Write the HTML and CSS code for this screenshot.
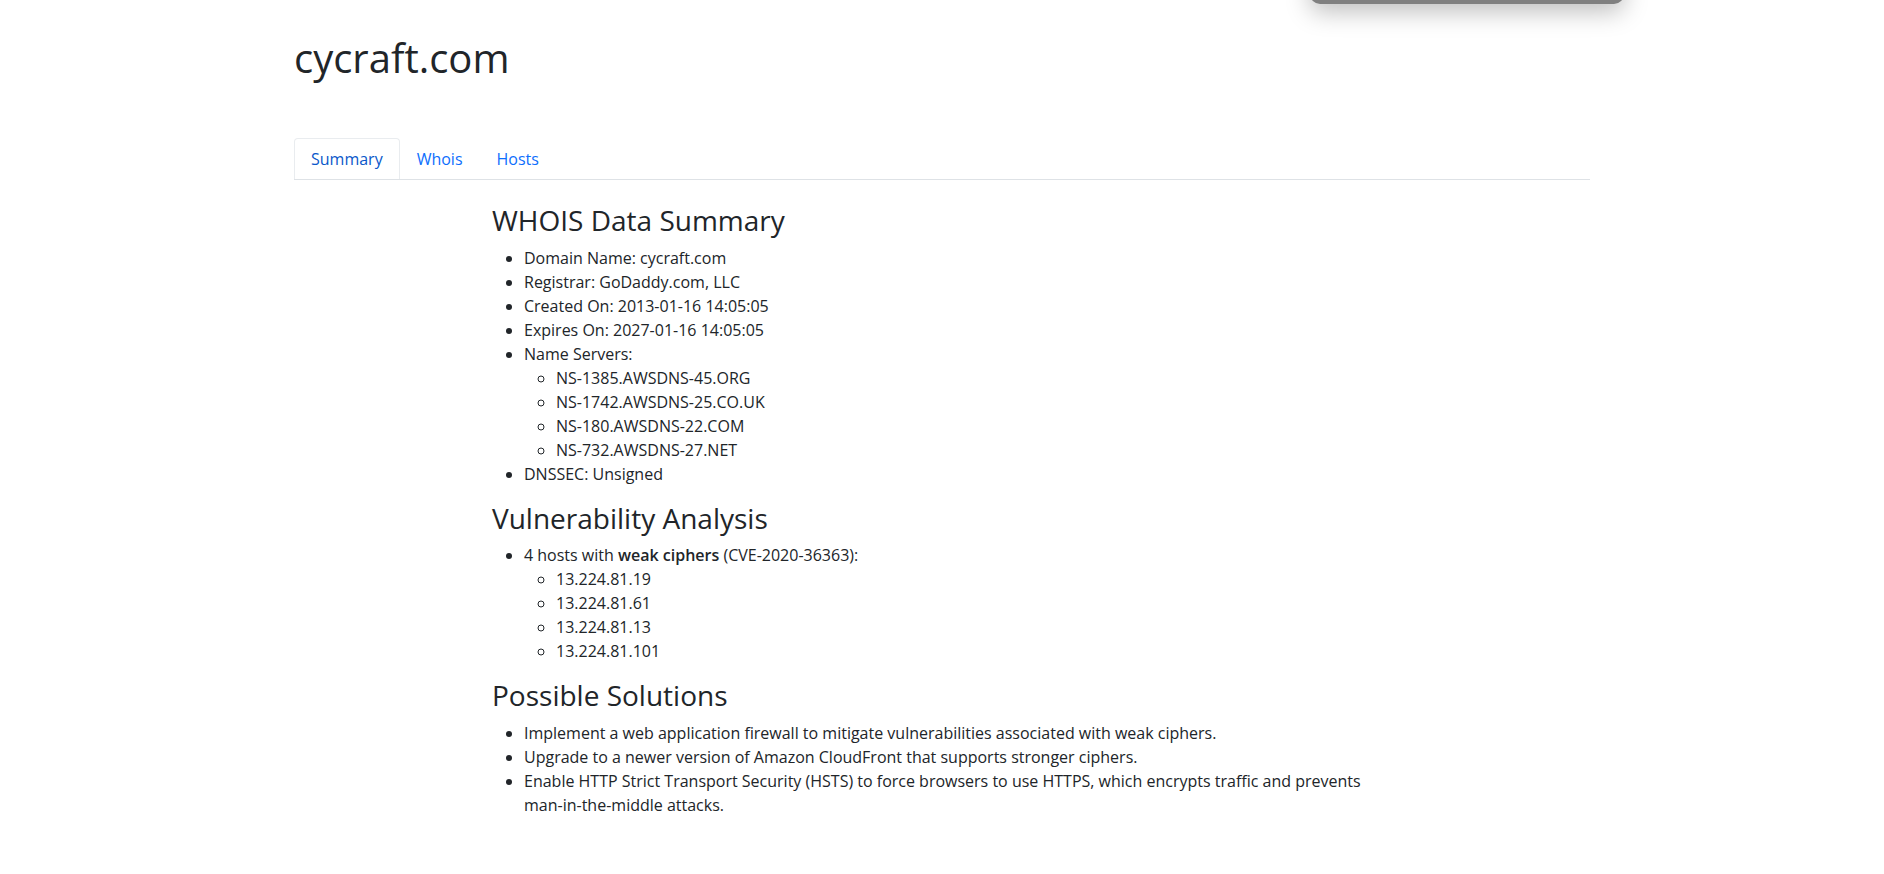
FILE: index.html
```html
<!DOCTYPE html>
<html lang="en">
<head>
<meta charset="utf-8">
<title>cycraft.com</title>
<link rel="stylesheet" href="styles.css">
</head>
<body>
<div class="toast" aria-hidden="true"></div>
<main class="container">
  <h1 class="title">cycraft.com</h1>
  <nav class="tabs">
    <a class="tab tab-active" href="#summary">Summary</a>
    <a class="tab" href="#whois">Whois</a>
    <a class="tab" href="#hosts">Hosts</a>
  </nav>
  <div class="report" id="summary">
    <h2>WHOIS Data Summary</h2>
    <ul>
      <li>Domain Name: cycraft.com</li>
      <li>Registrar: GoDaddy.com, LLC</li>
      <li>Created On: 2013-01-16 14:05:05</li>
      <li>Expires On: 2027-01-16 14:05:05</li>
      <li>Name Servers:
        <ul>
          <li>NS-1385.AWSDNS-45.ORG</li>
          <li>NS-1742.AWSDNS-25.CO.UK</li>
          <li>NS-180.AWSDNS-22.COM</li>
          <li>NS-732.AWSDNS-27.NET</li>
        </ul>
      </li>
      <li>DNSSEC: Unsigned</li>
    </ul>
    <h2>Vulnerability Analysis</h2>
    <ul>
      <li>4 hosts with <strong>weak ciphers</strong> (CVE-2020-36363):
        <ul>
          <li>13.224.81.19</li>
          <li>13.224.81.61</li>
          <li>13.224.81.13</li>
          <li>13.224.81.101</li>
        </ul>
      </li>
    </ul>
    <h2>Possible Solutions</h2>
    <ul>
      <li>Implement a web application firewall to mitigate vulnerabilities associated with weak ciphers.</li>
      <li>Upgrade to a newer version of Amazon CloudFront that supports stronger ciphers.</li>
      <li>Enable HTTP Strict Transport Security (HSTS) to force browsers to use HTTPS, which encrypts traffic and prevents man-in-the-middle attacks.</li>
    </ul>
  </div>
</main>
</body>
</html>
```
FILE: styles.css
```css
*, *::before, *::after { box-sizing: border-box; }
body {
  margin: 0;
  background: #fff;
  color: #212529;
  font: 400 16px/24px "Segoe UI", "Open Sans", "Noto Sans", sans-serif;
}
.container {
  max-width: 1320px;
  margin: 0 auto;
  padding: 32px 12px 0;
}
.title {
  margin: 0;
  padding-bottom: 54px;
  font-size: 40px;
  font-weight: 400;
  line-height: 52px;
}
.tabs {
  display: flex;
  border-bottom: 1px solid #dee2e6;
}
.tab {
  padding: 8px 16px;
  border: 1px solid transparent;
  border-bottom: 0;
  border-radius: 4px 4px 0 0;
  color: #0d6efd;
  text-decoration: none;
}
.tab-active {
  border-color: #e9ecef;
  color: #0a58ca;
}
.report {
  max-width: 900px;
  margin: 24px auto 0;
}
h2 {
  margin: 0 0 8px;
  font-size: 28px;
  font-weight: 400;
  line-height: 1.2;
}
ul { margin: 0 0 16px; padding-left: 32px; }
ul ul { margin-bottom: 0; }
strong { font-weight: 600; }
.toast {
  position: absolute;
  top: -40px;
  right: 260px;
  width: 314px;
  height: 44px;
  border-radius: 10px;
  background: #808080;
  box-shadow: 0 8px 24px rgba(0, 0, 0, .25);
}
```
